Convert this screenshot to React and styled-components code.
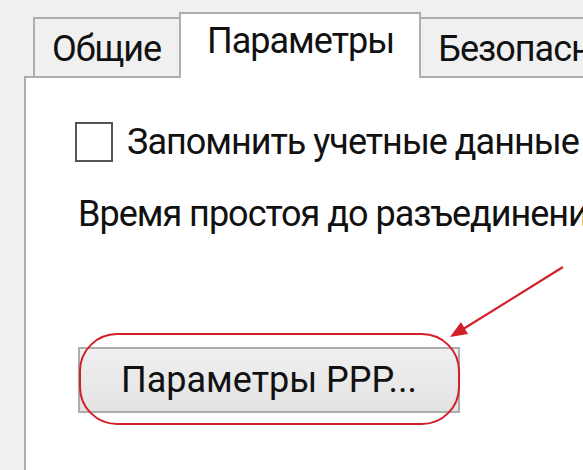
import React from "react"
import styled, { createGlobalStyle } from "styled-components"

const GlobalStyle = createGlobalStyle`
  html, body {
    margin: 0;
    padding: 0;
  }
  body {
    background: #f0f0f0;
    font-family: Roboto, "Open Sans", "Noto Sans", sans-serif;
    color: #111111;
  }
`

const Screen = styled.div`
  position: relative;
  width: 583px;
  height: 470px;
  overflow: hidden;
  background: #f0f0f0;
  display: flex;
  flex-direction: column;
  padding: 12px 0 0 24px;
  box-sizing: border-box;
`

const TabStrip = styled.div`
  display: flex;
  align-items: flex-end;
  height: 64px;
  margin-left: 9px;
  white-space: nowrap;
`

const Tab = styled.div`
  position: relative;
  box-sizing: border-box;
  font-size: 36px;
  line-height: 40px;
  letter-spacing: -1px;
  border: 2px solid #adadad;
  border-bottom: none;
  background: ${(p) => (p.$active ? "#ffffff" : "#f0f0f0")};
  height: ${(p) => (p.$active ? "66px" : "59px")};
  padding: ${(p) => (p.$active ? "7px 25px 0 26px" : "10px 18px 0 17px")};
  margin-bottom: ${(p) => (p.$active ? "-2px" : "0")};
  margin-left: ${(p) => (p.$first ? "0" : "-2px")};
  z-index: ${(p) => (p.$active ? 2 : 1)};
  flex-shrink: 0;
`

const Panel = styled.div`
  flex: 1;
  background: #ffffff;
  border-top: 2px solid #adadad;
  border-left: 2px solid #adadad;
  padding: 44px 0 0 52px;
  display: flex;
  flex-direction: column;
  align-items: flex-start;
  white-space: nowrap;
`

const CheckRow = styled.label`
  display: flex;
  align-items: center;
  gap: 14px;
  height: 40px;
  margin-left: -3px;
  font-size: 36px;
  line-height: 40px;
  letter-spacing: -1px;
`

const Box = styled.span`
  box-sizing: border-box;
  width: 38px;
  height: 40px;
  border: 2px solid #555555;
  background: #ffffff;
  flex-shrink: 0;
`

const Line = styled.div`
  margin-top: 32px;
  font-size: 36px;
  line-height: 40px;
  letter-spacing: -1px;
`

const ButtonWrap = styled.div`
  position: relative;
  margin-top: 113px;
`

const Button = styled.button`
  box-sizing: border-box;
  width: 382px;
  height: 66px;
  border: 2px solid #acacac;
  background: linear-gradient(#f0f0f0, #e3e3e3);
  font-family: inherit;
  font-size: 36px;
  line-height: 40px;
  color: #111111;
  padding: 0;
  text-align: center;
`

const Ring = styled.div`
  position: absolute;
  left: 1px;
  top: -14px;
  width: 381px;
  height: 92px;
  box-sizing: border-box;
  border: 2px solid #d2202b;
  border-radius: 38px;
  pointer-events: none;
`

const Arrow = styled.svg`
  position: absolute;
  left: 0;
  top: 0;
  pointer-events: none;
`

export default function App() {
  return (
    <>
      <GlobalStyle />
      <Screen>
        <TabStrip>
          <Tab $first>Общие</Tab>
          <Tab $active>Параметры</Tab>
          <Tab>Безопасность</Tab>
        </TabStrip>
        <Panel>
          <CheckRow>
            <Box />
            Запомнить учетные данные
          </CheckRow>
          <Line>Время простоя до разъединения:</Line>
          <ButtonWrap>
            <Button>Параметры PPP...</Button>
            <Ring />
          </ButtonWrap>
        </Panel>
        <Arrow width="583" height="470" viewBox="0 0 583 470">
          <line x1="563" y1="267" x2="460" y2="331" stroke="#d2202b" strokeWidth="2.2" />
          <polygon points="450,337 461,322 468,334" fill="#d2202b" />
        </Arrow>
      </Screen>
    </>
  )
}
